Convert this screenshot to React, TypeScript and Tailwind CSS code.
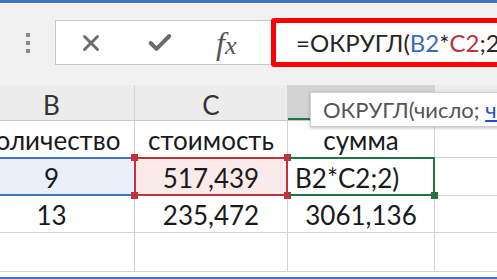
import { X, Check } from 'lucide-react'

const grid = 'border-r border-[#d4d4d4]'

function Corner({ className }: { className: string }) {
  return <span className={`absolute w-[7px] h-[7px] ${className}`} />
}

export default function App() {
  return (
    <div className="relative w-[497px] h-[279px] overflow-hidden bg-white font-['Lato','Open_Sans',sans-serif] text-[#1a1a1a]">
      {/* верхняя полоса */}
      <div className="h-[3px] bg-[#4472c4]" />

      {/* строка формул */}
      <div className="h-[82px] bg-[#f1f1f1] flex items-start pt-[17px]">
        <div className="w-[55px] h-[45px] shrink-0 flex items-center justify-center">
          <div className="flex flex-col gap-[4px]">
            <span className="w-[4px] h-[4px] bg-[#8a8a8a]" />
            <span className="w-[4px] h-[4px] bg-[#8a8a8a]" />
            <span className="w-[4px] h-[4px] bg-[#8a8a8a]" />
          </div>
        </div>
        <div className="w-[216px] h-[45px] shrink-0 bg-white border border-[#c6c6c6] border-r-0 flex items-center">
          <X className="ml-[22px] w-[26px] h-[26px] text-[#6b6b6b]" strokeWidth={2.6} />
          <Check className="ml-[42px] w-[28px] h-[28px] text-[#6b6b6b]" strokeWidth={3.4} />
          <span className="ml-[42px] font-['Liberation_Serif',serif] italic text-[32px] text-[#555] leading-none">
            f<span className="text-[26px]">x</span>
          </span>
        </div>
        <div className="-mt-[2px] w-[240px] h-[49px] shrink-0 border-[5px] border-[#ff0000] rounded-[3px] bg-white flex items-center pl-[20px] text-[24px] whitespace-nowrap text-[#262626]">
          =ОКРУГЛ(<span className="text-[#3e68c2]">B2</span>*<span className="text-[#c0333a]">C2</span>;2)
        </div>
      </div>

      {/* заголовки столбцов */}
      <div className="h-[36px] flex -ml-[31px] bg-[#ececec] border-b border-[#c8c8c8] text-[26px] text-[#333]">
        <div className={`w-[166px] flex items-center justify-center pt-[5px] ${grid} border-[#c4c4c4]`}>B</div>
        <div className={`w-[153px] flex items-center justify-center pt-[5px] ${grid} border-[#c4c4c4]`}>C</div>
        <div className="w-[147px] flex items-center justify-center pt-[5px] bg-[#d3d3d3] border-b-[2px] border-[#217346]">D</div>
        <div className="flex-1" />
      </div>

      {/* строка 1 */}
      <div className="h-[37px] flex -ml-[31px] border-b border-[#d4d4d4] text-[26px]">
        <div className={`w-[166px] flex items-center justify-center pt-[3px] ${grid}`}>количество</div>
        <div className={`w-[153px] flex items-center justify-center pt-[3px] ${grid}`}>стоимость</div>
        <div className={`w-[147px] flex items-center justify-center pt-[3px] ${grid}`}>сумма</div>
        <div className="flex-1" />
      </div>

      {/* строка 2 */}
      <div className="h-[38px] flex -ml-[31px] border-b border-[#d4d4d4] text-[26px]">
        <div className={`relative w-[166px] flex items-center justify-center pt-[3px] bg-[#eaf0fa] ${grid}`}>
          9
          <span className="absolute -top-[1px] -bottom-[1px] left-0 right-[-1px] border-y-[2px] border-[#4472c4]" />
        </div>
        <div className={`relative w-[153px] flex items-center justify-center pt-[3px] bg-[#fbeaea] ${grid}`}>
          517,439
          <span className="absolute -top-[1px] -bottom-[1px] -left-[1px] -right-[1px] border-[2px] border-[#c0333a]" />
          <Corner className="-top-[4px] -left-[4px] bg-[#c0333a]" />
          <Corner className="-bottom-[4px] -left-[4px] bg-[#c0333a]" />
          <Corner className="-top-[4px] -right-[4px] bg-[#c0333a]" />
          <Corner className="-bottom-[4px] -right-[4px] bg-[#c0333a]" />
        </div>
        <div className={`relative w-[147px] flex items-center pl-[7px] pt-[3px] ${grid}`}>
          B2*C2;2)
          <span className="absolute -top-[1px] -bottom-[1px] left-[1px] -right-[1px] border-[2px] border-l-0 border-[#217346]" />
          <Corner className="-bottom-[4px] -right-[4px] bg-[#217346]" />
        </div>
        <div className="flex-1" />
      </div>

      {/* строка 3 */}
      <div className="h-[37px] flex -ml-[31px] border-b border-[#d4d4d4] text-[26px]">
        <div className={`w-[166px] flex items-center justify-center pt-[3px] ${grid}`}>13</div>
        <div className={`w-[153px] flex items-center justify-center pt-[3px] ${grid}`}>235,472</div>
        <div className={`w-[147px] flex items-center justify-center pt-[3px] ${grid}`}>3061,136</div>
        <div className="flex-1" />
      </div>

      {/* строка 4 */}
      <div className="h-[39px] flex -ml-[31px] border-b border-[#d4d4d4]">
        <div className={`w-[166px] ${grid}`} />
        <div className={`w-[153px] ${grid}`} />
        <div className={`w-[147px] ${grid}`} />
        <div className="flex-1" />
      </div>

      <div className="h-[5px]" />
      <div className="h-[2px] bg-[#4472c4]" />

      {/* подсказка функции */}
      <div className="absolute left-[310px] top-[92px] h-[35px] w-[200px] bg-white border border-[#cfcfcf] shadow-[0_1px_3px_rgba(0,0,0,0.25)] flex items-center pl-[12px] text-[22px] text-[#555] whitespace-nowrap">
        ОКРУГЛ(число;&nbsp;<span className="text-[#1f4fd1] underline">число_разрядов</span>)
      </div>
    </div>
  )
}
